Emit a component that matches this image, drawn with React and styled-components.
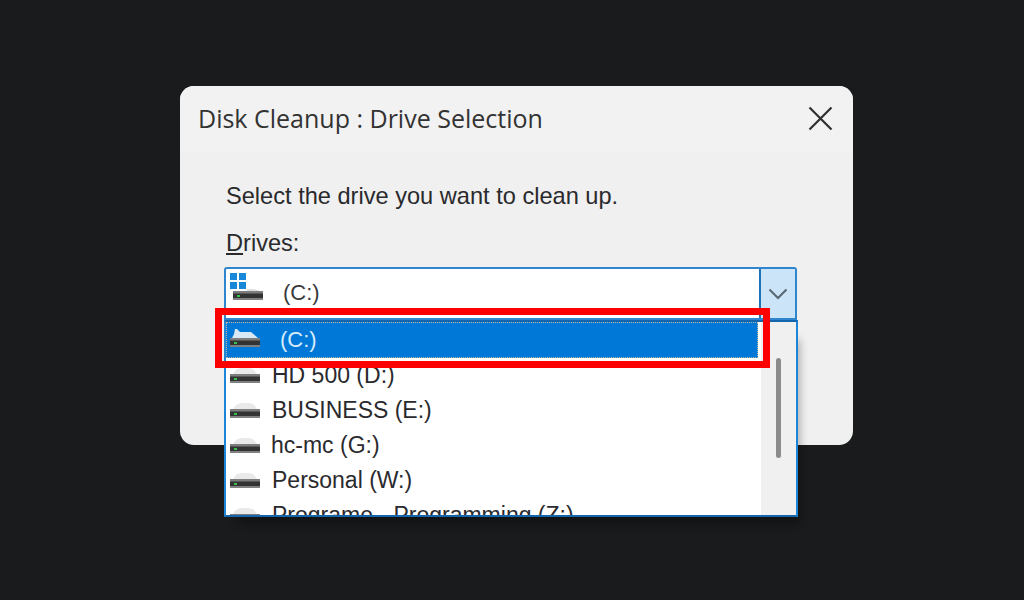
import React from "react";
import styled, { createGlobalStyle } from "styled-components";

const Global = createGlobalStyle`
  html, body { margin: 0; padding: 0; background: #1a1b1c; }
  body { width: 1024px; height: 600px; overflow: hidden; font-family: "Liberation Sans", Arial, sans-serif; }
`;

const Page = styled.div`
  width: 1024px;
  height: 600px;
  box-sizing: border-box;
  padding: 86px 0 0 180px;
  background: #1a1b1c;
`;

const Dialog = styled.div`
  width: 673px;
  height: 359px;
  background: #f0f0f0;
  border-radius: 14px;
  box-sizing: border-box;
  color: #2a2a2c;
`;

const TitleBar = styled.div`
  height: 66px;
  background: #f2f2f2;
  border-radius: 14px 14px 0 0;
  display: flex;
  align-items: center;
  justify-content: space-between;
  padding: 0 20px 0 18px;
`;

const Title = styled.div`
  font-family: "Open Sans", sans-serif;
  font-size: 25px;
  line-height: 64px;
  height: 66px;
  color: #333;
`;

const Close = styled.svg`
  width: 25px;
  height: 25px;
  display: block;
  margin-top: -2px;
`;

const Body = styled.div`
  padding: 29px 56px 0 44px;
`;

const Prompt = styled.div`
  font-size: 23.6px;
  line-height: 30px;
  margin-left: 2px;
`;

const Label = styled.div`
  font-size: 23.6px;
  line-height: 30px;
  margin: 17px 0 9px 2px;
  u { text-underline-offset: 2px; }
`;

const ComboWrap = styled.div`
  position: relative;
  width: 573px;
`;

const Combo = styled.div`
  height: 53px;
  box-sizing: border-box;
  border: 2px solid #2f86cf;
  border-radius: 3px 3px 0 0;
  background: #fff;
  display: flex;
  align-items: stretch;
`;

const ComboValue = styled.div`
  flex: 1;
  display: flex;
  align-items: flex-start;
  padding: 3px 0 0 4px;
  font-size: 22px;
`;

const ComboText = styled.span`
  margin: 8px 0 0 19px;
  color: #3a3a3c;
`;

const ComboButton = styled.div`
  width: 34px;
  background: #cce4f7;
  border-left: 2px solid #1f72b8;
  display: flex;
  align-items: center;
  justify-content: center;
`;

const List = styled.div`
  position: absolute;
  top: 53px;
  left: 0;
  width: 574px;
  height: 197px;
  box-sizing: border-box;
  background: #fff;
  border: 2px solid #1e84d6;
  border-top-color: #1565ad;
  border-bottom-color: #1565ad;
  display: flex;
  overflow: hidden;
  box-shadow: 8px 14px 8px -6px rgba(0, 0, 0, 0.28);
`;

const Rows = styled.div`
  flex: 1;
  min-width: 0;
  height: 240px;
`;

const Row = styled.div`
  height: 35px;
  display: flex;
  align-items: center;
  font-size: 23px;
  color: #2a2a2e;
  padding-left: 3px;
  white-space: nowrap;
  box-sizing: border-box;
`;

const SelectedRow = styled(Row)`
  height: 36px;
  margin-right: 3px;
  background: #0078d7;
  color: #d8ecfb;
  font-size: 22px;
  outline: 1px dotted #b8b8a8;
  outline-offset: -1px;
`;

const RowText = styled.span`
  margin-left: ${(p) => p.$gap}px;
`;

const IconSlot = styled.svg`
  display: block;
  flex: none;
  margin-top: ${(p) => p.$drop}px;
`;

const Track = styled.div`
  width: 35px;
  flex: none;
  background: #f0f0f0;
  display: flex;
  justify-content: center;
  padding-top: 36px;
  box-sizing: border-box;
`;

const Thumb = styled.div`
  width: 5px;
  height: 100px;
  border-radius: 3px;
  background: #8b8b8b;
`;

const RedBox = styled.div`
  position: absolute;
  left: -9px;
  top: 41px;
  width: 555px;
  height: 60px;
  box-sizing: border-box;
  border: 7px solid #f00;
  pointer-events: none;
`;

const DriveBody = () => (
  <>
    <rect x="1" y="9" width="30" height="9" rx="1.5" fill="#333" />
    <rect x="1" y="9" width="30" height="2.5" fill="#7d7d7d" />
    <rect x="1" y="16" width="30" height="2" fill="#808080" />
    <rect x="5" y="13" width="3" height="2" fill="#35c24a" />
  </>
);

const PlainDrive = () => (
  <IconSlot width="32" height="22" viewBox="0 0 32 22" $drop={0}>
    <path d="M4 9 Q7 3 13 3 H19 Q25 3 28 9 Z" fill="#e9e9e9" />
    <DriveBody />
  </IconSlot>
);

const SelectedDrive = () => (
  <IconSlot width="32" height="26" viewBox="0 0 32 26" $drop={-4}>
    <g transform="translate(0 4)">
      <path d="M3 9 L5 5 L6 0 L8 0 L11 3 H22 L29 9 Z" fill="#d8e8f4" />
      <DriveBody />
    </g>
  </IconSlot>
);

const SystemDrive = () => (
  <IconSlot width="34" height="32" viewBox="0 0 34 32" $drop={0}>
    <g fill="#1a88d8">
      <rect x="0" y="1" width="7" height="7" />
      <rect x="9" y="1" width="7" height="7" />
      <rect x="0" y="10" width="7" height="7" />
      <rect x="9" y="10" width="7" height="7" />
    </g>
    <g transform="translate(2 10)">
      <path d="M14 9 L16 7 H22 L28 9 Z" fill="#dedede" />
      <DriveBody />
    </g>
  </IconSlot>
);

const Chevron = () => (
  <svg width="20" height="12" viewBox="0 0 20 12">
    <path d="M1.5 1.5 L10 10 L18.5 1.5" fill="none" stroke="#5a6670" strokeWidth="2" />
  </svg>
);

const drives = [
  ["HD 500 (D:)", 11],
  ["BUSINESS (E:)", 11],
  ["hc-mc (G:)", 10],
  ["Personal (W:)", 11],
  ["Programe - Programming (Z:)", 11],
];

export default function App() {
  return (
    <Page>
      <Global />
      <Dialog>
        <TitleBar>
          <Title>Disk Cleanup : Drive Selection</Title>
          <Close viewBox="0 0 25 25">
            <path d="M1.5 1.5 L23.5 23.5 M23.5 1.5 L1.5 23.5" stroke="#2f2f2f" strokeWidth="2.2" fill="none" />
          </Close>
        </TitleBar>
        <Body>
          <Prompt>Select the drive you want to clean up.</Prompt>
          <Label><u>D</u>rives:</Label>
          <ComboWrap>
            <Combo>
              <ComboValue>
                <SystemDrive />
                <ComboText>(C:)</ComboText>
              </ComboValue>
              <ComboButton><Chevron /></ComboButton>
            </Combo>
            <List>
              <Rows>
                <SelectedRow>
                  <SelectedDrive />
                  <RowText $gap={19}>(C:)</RowText>
                </SelectedRow>
                {drives.map(([name, gap]) => (
                  <Row key={name}>
                    <PlainDrive />
                    <RowText $gap={gap}>{name}</RowText>
                  </Row>
                ))}
              </Rows>
              <Track><Thumb /></Track>
            </List>
            <RedBox />
          </ComboWrap>
        </Body>
      </Dialog>
    </Page>
  );
}
